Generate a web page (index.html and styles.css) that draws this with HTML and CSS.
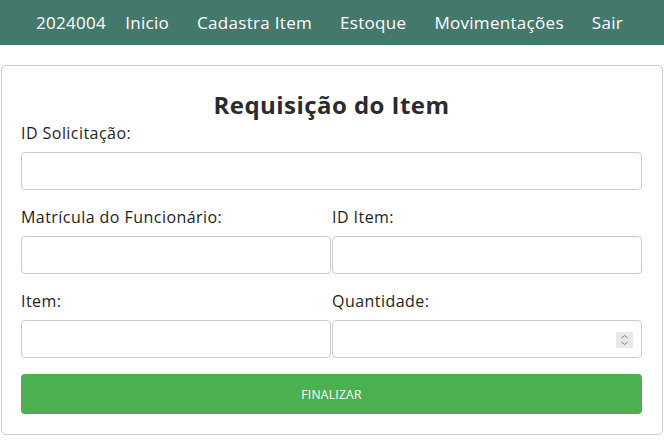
FILE: index.html
```html
<!DOCTYPE html>
<html lang="pt-BR">
<head>
<meta charset="utf-8">
<title>Requisição do Item</title>
<link rel="stylesheet" href="styles.css">
</head>
<body>
<nav class="nav">
  <span class="brand">2024004</span>
  <a class="link" href="#">Inicio</a>
  <a class="link" href="#">Cadastra Item</a>
  <a class="link" href="#">Estoque</a>
  <a class="link" href="#">Movimentações</a>
  <a class="link" href="#">Sair</a>
</nav>
<main class="card">
  <h1 class="title">Requisição do Item</h1>
  <form class="form">
    <div class="field full">
      <label class="label">ID Solicitação:</label>
      <input class="input" type="text">
    </div>
    <div class="field">
      <label class="label">Matrícula do Funcionário:</label>
      <input class="input" type="text">
    </div>
    <div class="field">
      <label class="label">ID Item:</label>
      <input class="input" type="text">
    </div>
    <div class="field">
      <label class="label">Item:</label>
      <input class="input" type="text">
    </div>
    <div class="field">
      <label class="label">Quantidade:</label>
      <div class="num-wrap">
        <input class="input number" type="number">
        <svg class="spin" width="17" height="16" viewBox="0 0 17 16" aria-hidden="true">
          <rect width="17" height="16" fill="#e9e9ed"/>
          <path d="M5.5 6 L8.5 3.5 L11.5 6" fill="none" stroke="#7a7a80" stroke-width="1"/>
          <path d="M5.5 10 L8.5 12.5 L11.5 10" fill="none" stroke="#7a7a80" stroke-width="1"/>
        </svg>
      </div>
    </div>
    <button class="btn full" type="button">FINALIZAR</button>
  </form>
</main>
</body>
</html>
```
FILE: styles.css
```css
* { box-sizing: border-box; }
body {
  margin: 0;
  font-family: "Open Sans", "Noto Sans", sans-serif;
  color: #1e1e1e;
  background: #fff;
}
.nav {
  height: 45px;
  background: #45786c;
  display: flex;
  align-items: center;
  padding-left: 36px;
  font-size: 17px;
  letter-spacing: 0.3px;
}
.brand { color: #fff; margin-right: 19px; }
.link { color: #fff; text-decoration: none; margin-right: 28px; }
.card {
  margin: 20px 1px 0;
  border: 1px solid #ccc;
  border-radius: 5px;
  padding: 20px 20px 20px 19px;
}
.title {
  margin: 4px 0 4px;
  text-align: center;
  font-size: 24px;
  font-weight: 700;
  color: #2b2b2b;
  line-height: 30px;
  letter-spacing: 0.45px;
}
.form {
  display: grid;
  grid-template-columns: 1fr 1fr;
  column-gap: 1px;
}
.field { display: flex; flex-direction: column; }
.full { grid-column: 1 / -1; }
.label {
  font-size: 16px;
  line-height: 18px;
  margin-bottom: 10px;
  letter-spacing: 0.45px;
}
.input {
  width: 100%;
  height: 38px;
  border: 1px solid #ccc;
  border-radius: 4px;
  margin-bottom: 18px;
  font-family: inherit;
  padding: 0 10px;
}
.num-wrap { position: relative; }
.number { -moz-appearance: textfield; appearance: textfield; }
.number::-webkit-inner-spin-button,
.number::-webkit-outer-spin-button { -webkit-appearance: none; margin: 0; }
.spin {
  position: absolute;
  right: 9px;
  top: 12px;
}
.btn {
  height: 40px;
  margin-top: -2px;
  border: none;
  border-radius: 4px;
  background: #4caf50;
  color: #fff;
  font-family: inherit;
  font-size: 12px;
  letter-spacing: 0.3px;
}
```
